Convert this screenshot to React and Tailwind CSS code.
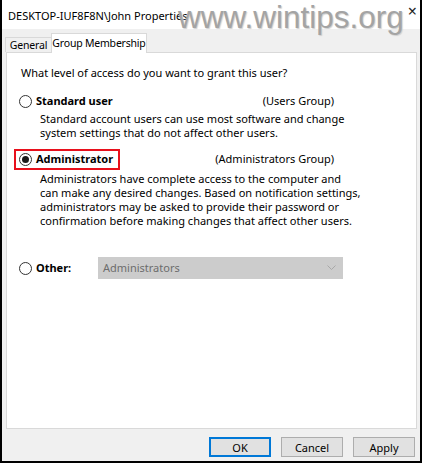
import React from "react";

function Radio({ checked }) {
  return (
    <span className="w-[13px] h-[13px] rounded-full border border-[#333333] bg-white flex items-center justify-center shrink-0">
      {checked && <span className="w-[7px] h-[7px] rounded-full bg-[#1a1a1a]" />}
    </span>
  );
}

export default function App() {
  const font = { fontFamily: '"Noto Sans", "Segoe UI", sans-serif' };
  return (
    <div
      className="w-[422px] h-[463px] flex flex-col border-x-2 border-b-2 border-black bg-[#f0f0f0] relative overflow-hidden text-[11px] text-black whitespace-nowrap"
      style={font}
    >
      {/* title bar */}
      <div className="h-[29px] bg-white flex items-center justify-between pl-[6px] pr-[3px] shrink-0">
        <span className="text-[11px] leading-[14px] pt-[2px]">DESKTOP-IUF8F8N\John Properties</span>
        <span className="text-[16px] leading-none text-[#222] -mt-[8px]">×</span>
      </div>
      {/* watermark */}
      <div
        className="absolute left-[176px] top-[1px] text-[31.5px] leading-[32px] text-[#a4a4a4] pointer-events-none"
        style={{ fontFamily: '"Liberation Sans", Arial, sans-serif', textShadow: "1px 1px 1px #d0d0d0" }}
      >
        www.wintips.org
      </div>
      {/* tabs */}
      <div className="flex items-end h-[23px] pl-[3px] shrink-0 relative z-10 text-[10.5px] tracking-[-0.2px]">
        <div className="h-[15px] w-[47px] border border-b-0 border-[#d9d9d9] bg-[#f0f0f0] flex items-center justify-center leading-[14px]">
          General
        </div>
        <div className="h-[20px] w-[96px] -ml-[1px] border border-b-0 border-[#d9d9d9] bg-white flex items-center justify-center leading-[14px] mb-[-1px] pb-[1px]">
          Group Membership
        </div>
      </div>
      {/* panel */}
      <div className="ml-[4px] w-[411px] h-[377px] bg-white border border-[#d9d9d9] shrink-0 relative flex flex-col">
        <div className="pt-[13px] pl-[14px] leading-[14px]">What level of access do you want to grant this user?</div>

        <div className="mt-[11px] pl-[12px] h-[20px] flex items-center w-[327px] justify-between">
          <div className="flex items-center gap-[4px]">
            <Radio />
            <span className="font-bold">Standard user</span>
          </div>
          <span>(Users Group)</span>
        </div>
        <div className="mt-[1px] pl-[33px] leading-[14px]">
          <div>Standard account users can use most software and change</div>
          <div>system settings that do not affect other users.</div>
        </div>

        <div className="mt-[9px] pl-[12px] h-[21px] flex items-center w-[327px] justify-between relative">
          <div className="flex items-center gap-[4px]">
            <Radio checked />
            <span className="font-bold">Administrator</span>
          </div>
          <span>(Administrators Group)</span>
          <div className="absolute left-[7px] top-0 w-[106px] h-[21px] border-2 border-[#e8101c]" />
        </div>
        <div className="mt-[2px] pl-[33px] leading-[14px]">
          <div>Administrators have complete access to the computer and</div>
          <div>can make any desired changes. Based on notification settings,</div>
          <div>administrators may be asked to provide their password or</div>
          <div>confirmation before making changes that affect other users.</div>
        </div>

        <div className="mt-[29px] pl-[12px] flex items-center">
          <div className="w-[79px] flex items-center gap-[4px]">
            <Radio />
            <span className="font-bold">Other:</span>
          </div>
          <div className="w-[245px] h-[22px] bg-[#cccccc] border border-[#cccccc] flex items-center justify-between pl-[4px] pr-[6px] text-[#6d6d6d]">
            <span>Administrators</span>
            <svg width="9" height="6" viewBox="0 0 9 6" fill="none">
              <path d="M0.5 0.5 L4.5 4.5 L8.5 0.5" stroke="#a8a8a8" strokeWidth="1" />
            </svg>
          </div>
        </div>
      </div>
      {/* buttons */}
      <div className="flex justify-end gap-[10px] pr-[5px] pt-[8px]">
        <button className="w-[62px] h-[20px] bg-[#e1e1e1] border-2 border-[#0078d7] flex items-center justify-center leading-none">
          OK
        </button>
        <button className="w-[62px] h-[20px] bg-[#e1e1e1] border border-[#adadad] flex items-center justify-center leading-none">
          Cancel
        </button>
        <button className="w-[62px] h-[20px] bg-[#e1e1e1] border border-[#adadad] flex items-center justify-center leading-none">
          Apply
        </button>
      </div>
    </div>
  );
}
